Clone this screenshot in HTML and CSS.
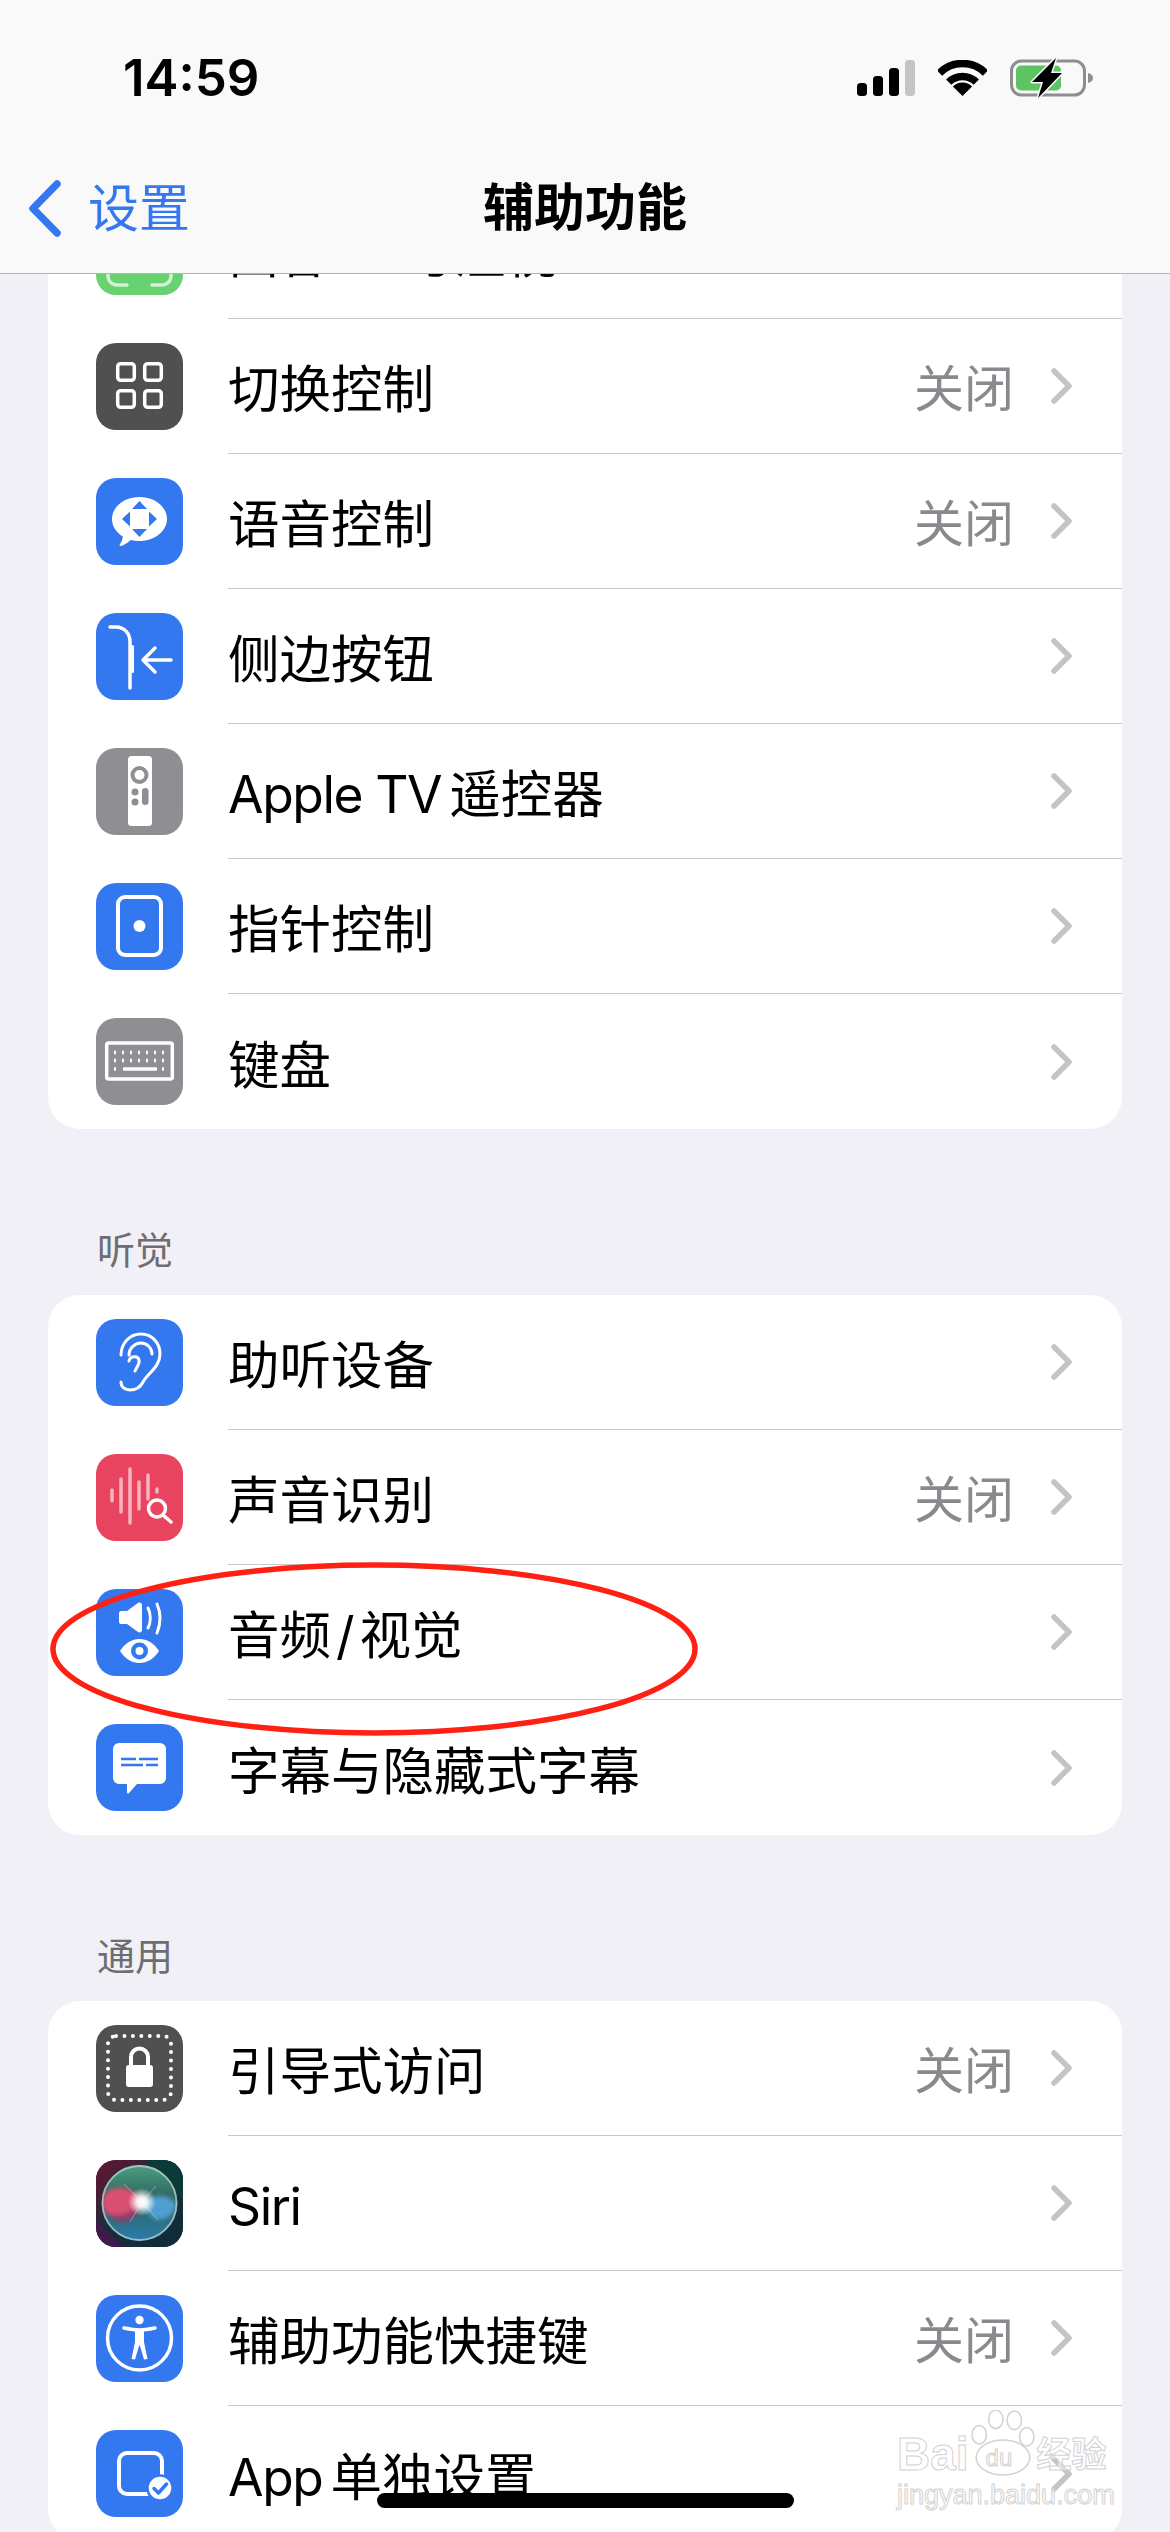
FILE: index.html
```html
<!DOCTYPE html>
<html lang="zh-CN">
<head>
    <meta charset="UTF-8">
    <title>辅助功能</title>
    <link rel="stylesheet" href="styles.css">
</head>
<body>
<div class="screen">

    <!-- scrolled list -->
    <div class="list">
        <div class="card card-top">
            <div class="row">
                <span class="icon icon-green">
                    <svg viewBox="0 0 87 87"><path class="line-soft" d="M12 58v10a9 9 0 0 0 9 9h10M75 58v10a9 9 0 0 1-9 9H56M12 29V19a9 9 0 0 1 9-9h10M75 29V19a9 9 0 0 0-9-9H56"/></svg>
                </span>
                <div class="row-main"><span class="label"><span class="latin">面容 ID </span>与注视</span><span class="chev"></span></div>
            </div>
            <div class="row">
                <span class="icon icon-dark">
                    <svg viewBox="0 0 87 87"><g class="line"><rect x="21.7" y="20.7" width="16.6" height="16.6" rx="3"/><rect x="48.7" y="20.7" width="16.6" height="16.6" rx="3"/><rect x="21.7" y="47.7" width="16.6" height="16.6" rx="3"/><rect x="48.7" y="47.7" width="16.6" height="16.6" rx="3"/></g></svg>
                </span>
                <div class="row-main"><span class="label">切换控制</span><span class="value">关闭</span><span class="chev"></span></div>
            </div>
            <div class="row">
                <span class="icon icon-blue">
                    <svg viewBox="0 0 87 87"><path class="solid" d="M43.5 19c15.2 0 27.5 9.8 27.5 22S58.700 63 43.500 63c-3 0-6-.4-8.700-1.100C31 65 27.500 67.500 25 68c-1.500 .2-1.800-1-1-2 1.500-2 2.500-4.500 2.800-7.500C20.300 54.500 16 48.200 16 41c0-12.200 12.300-22 27.500-22z"/><path class="cut" d="M43.500 23l7.500 8H36zM43.500 59L36 51h15zM26 41l8-7.500v15zM61 41l-8-7.500v15z"/></svg>
                </span>
                <div class="row-main"><span class="label">语音控制</span><span class="value">关闭</span><span class="chev"></span></div>
            </div>
            <div class="row">
                <span class="icon icon-blue">
                    <svg viewBox="0 0 87 87"><path class="line" d="M14 14h6c8 0 14 6 14 15v46"/><rect class="solid" x="33" y="32" width="5" height="28" rx="1.500"/><path class="line" d="M75 47H47M59 35L47 47l12 12"/></svg>
                </span>
                <div class="row-main"><span class="label">侧边按钮</span><span class="chev"></span></div>
            </div>
            <div class="row">
                <span class="icon icon-gray">
                    <svg viewBox="0 0 87 87"><rect class="solid" x="32" y="8" width="24" height="70" rx="3.500"/><circle class="ring-gray" cx="43.500" cy="27" r="7"/><circle class="fill-gray" cx="39" cy="44" r="3.500"/><circle class="fill-gray" cx="39" cy="54" r="3.500"/><rect class="fill-gray" x="46" y="40" width="6.500" height="17" rx="3.200"/></svg>
                </span>
                <div class="row-main"><span class="label"><span class="latin">Apple TV</span><span class="gap-s"></span>遥控器</span><span class="chev"></span></div>
            </div>
            <div class="row">
                <span class="icon icon-blue">
                    <svg viewBox="0 0 87 87"><rect class="line-wide" x="22" y="14" width="43" height="58" rx="7"/><circle class="solid" cx="43.500" cy="43" r="6"/></svg>
                </span>
                <div class="row-main"><span class="label">指针控制</span><span class="chev"></span></div>
            </div>
            <div class="row">
                <span class="icon icon-gray">
                    <svg viewBox="0 0 87 87">
                        <rect class="line" x="10.700" y="25" width="65.600" height="36" rx="2"/>
                        <path class="dots" d="M18 34.500h2M26 34.500h2M34 34.500h2M42 34.500h2M50 34.500h2M58 34.500h2M66 34.500h2M18 42.500h2M26 42.500h2M34 42.500h2M42 42.500h2M50 42.500h2M58 42.500h2M66 42.500h2M18 51h2M66 51h2"/>
                        <path class="dots" d="M27 51h34"/>
                    </svg>
                </span>
                <div class="row-main"><span class="label">键盘</span><span class="chev"></span></div>
            </div>
        </div>

        <div class="section-title">听觉</div>
        <div class="card">
            <div class="row">
                <span class="icon icon-blue">
                    <svg viewBox="0 0 87 87"><path class="line-thin" d="M25 36C25 24 34 15 45 15c11 0 19 9 19 20 0 13-12 19-17 28-3 6-7 8-13 8-5 0-9-3-9-8"/><path class="line-thin" d="M33 36c0-7 6-12 12-12s11 5 11 11"/><path class="line-thin" d="M33 42c1-5 9-6 10-1 1 4-2 6-4 11"/></svg>
                </span>
                <div class="row-main"><span class="label">助听设备</span><span class="chev"></span></div>
            </div>
            <div class="row">
                <span class="icon icon-red">
                    <svg viewBox="0 0 87 87"><path class="bars" d="M16 36v11M25 25v33M34 15v54M43 28v27M52 21v24M61 35v3"/><circle class="line" cx="61" cy="54.500" r="8.500"/><path class="line" d="M67 61l8 7"/></svg>
                </span>
                <div class="row-main"><span class="label">声音识别</span><span class="value">关闭</span><span class="chev"></span></div>
            </div>
            <div class="row">
                <span class="icon icon-blue">
                    <svg viewBox="0 0 87 87"><path class="solid" d="M23 24c0-1 1-2 2-2h6l11-8c2-1 4 0 4 2v25c0 2-2 3-4 2l-11-8h-6c-1 0-2-1-2-2z"/><path class="line-thin" d="M52 19c3 6 3 14 0 20M61 15c4 9 4 19 0 29"/><path class="solid" d="M24 62c5-8 12-12 19.500-12S58 54 63 62c-5 8-12 12-19.500 12S29 70 24 62z"/><circle class="cut" cx="43.500" cy="62" r="8.500"/><circle class="solid" cx="43.500" cy="62" r="4"/></svg>
                </span>
                <div class="row-main"><span class="label">音频<span class="slash">/</span>视觉</span><span class="chev"></span></div>
            </div>
            <div class="row">
                <span class="icon icon-blue">
                    <svg viewBox="0 0 87 87"><path class="solid" d="M23 19h41a6 6 0 0 1 6 6v29a6 6 0 0 1-6 6H41l-8 9c-1 1-2 .500-2-1v-8h-8a6 6 0 0 1-6-6V25a6 6 0 0 1 6-6z"/><path class="caption-lines" d="M25 35h15M43 35h19M25 41h22M50 41h12"/></svg>
                </span>
                <div class="row-main"><span class="label">字幕与隐藏式字幕</span><span class="chev"></span></div>
            </div>
        </div>

        <div class="section-title">通用</div>
        <div class="card">
            <div class="row">
                <span class="icon icon-dark">
                    <svg viewBox="0 0 87 87"><rect class="dotted" x="12" y="11" width="63" height="64" rx="8"/><rect class="solid" x="30" y="40" width="27" height="22" rx="3"/><path class="line-wide" d="M35 41v-9a8.500 8.500 0 0 1 17 0v9"/></svg>
                </span>
                <div class="row-main"><span class="label">引导式访问</span><span class="value">关闭</span><span class="chev"></span></div>
            </div>
            <div class="row">
                <span class="icon icon-siri">
                    <svg viewBox="0 0 87 87">
                        <defs>
                            <linearGradient id="siriBg" x1="0" y1="0" x2="1" y2="1">
                                <stop offset="0" stop-color="#6b1230"/>
                                <stop offset=".45" stop-color="#1c2c3c"/>
                                <stop offset="1" stop-color="#0e2c3a"/>
                            </linearGradient>
                            <linearGradient id="siriBody" x1="0" y1="0" x2="0" y2="1">
                                <stop offset="0" stop-color="#4a9f7f"/>
                                <stop offset=".45" stop-color="#2f6360"/>
                                <stop offset="1" stop-color="#2a7cab"/>
                            </linearGradient>
                            <radialGradient id="siriGlow">
                                <stop offset="0" stop-color="#fff"/>
                                <stop offset=".35" stop-color="#fff" stop-opacity=".9"/>
                                <stop offset="1" stop-color="#fff" stop-opacity="0"/>
                            </radialGradient>
                            <filter id="siriBlur"><feGaussianBlur stdDeviation="2"/></filter>
                            <clipPath id="siriBall"><circle cx="43.500" cy="43" r="38"/></clipPath>
                        </defs>
                        <rect width="87" height="87" fill="url(#siriBg)"/>
                        <path d="M87 0v40L60 12 50 0z" fill="#0c3a38"/>
                        <path d="M0 87V62l28 25z" fill="#4a1552" opacity=".8"/>
                        <circle cx="43.500" cy="43" r="38" fill="url(#siriBody)"/>
                        <g clip-path="url(#siriBall)" filter="url(#siriBlur)">
                            <path d="M48 43C40 26 14 22 7 37c-4 14 6 21 16 20 10-1 17-7 25-14z" fill="#d94f6f"/>
                            <path d="M46 43C56 34 74 33 80 44c-1 12-12 17-20 15-6-2-10-9-14-16z" fill="#4f9fd0"/>
                            <path d="M46 43C36 52 24 58 12 54c8 12 28 12 34-11z" fill="#8a3f6c"/>
                        </g>
                        <circle cx="43.500" cy="43" r="37" fill="none" stroke="#b9d6d0" stroke-width="1.800" opacity=".75"/>
                        <path d="M46 42L28 24M46 42L62 60M46 42L34 62M46 42L60 26" stroke="#fff" stroke-width="1" opacity=".35"/>
                        <circle cx="46" cy="42" r="14" fill="url(#siriGlow)"/>
                    </svg>
                </span>
                <div class="row-main"><span class="label"><span class="latin">Siri</span></span><span class="chev"></span></div>
            </div>
            <div class="row">
                <span class="icon icon-blue">
                    <svg viewBox="0 0 87 87"><circle class="line" cx="43.500" cy="43" r="32"/><circle class="solid" cx="43.500" cy="25" r="4.200"/><path class="line" d="M28 33c5 1 10 2 15.500 2S54 34 59 33"/><path class="solid" d="M39 34h9v13l3.500 17-3.500 .6-4.500-15-4.500 15-3.500-.6L39 47z"/></svg>
                </span>
                <div class="row-main"><span class="label">辅助功能快捷键</span><span class="value">关闭</span><span class="chev"></span></div>
            </div>
            <div class="row">
                <span class="icon icon-blue">
                    <svg viewBox="0 0 87 87"><rect class="line-wide" x="23" y="23" width="43" height="41" rx="8"/><circle class="badge" cx="64" cy="58" r="12.500"/><path class="check" d="M58 58.500l4.500 4.500 8-9"/></svg>
                </span>
                <div class="row-main"><span class="label"><span class="latin">App</span><span class="gap-s"></span>单独设置</span><span class="chev"></span></div>
            </div>
        </div>
    </div>

    <!-- nav bar sits over the list -->
    <div class="nav">
        <div class="status">
            <span class="time">14:59</span>
            <div class="status-icons">
                <svg class="signal" viewBox="0 0 58 36"><rect y="23" width="10" height="13" rx="3.500"/><rect x="16" y="16" width="10" height="20" rx="3.500"/><rect x="32" y="8" width="10" height="28" rx="3.500"/><rect class="signal-off" x="48" width="10" height="36" rx="3.500"/></svg>
                <svg class="wifi" viewBox="0 0 49 37"><path class="wifi-arc" d="M1.500 13A32.500 32.500 0 0 1 47.500 13M10.700 22.200A19.500 19.500 0 0 1 38.300 22.200"/><path d="M24.500 36L14.900 26.400A13.600 13.600 0 0 1 34.100 26.400Z"/></svg>
                <svg class="battery" viewBox="0 0 84 40">
                    <rect class="batt-body" x="1.500" y="3" width="73" height="34" rx="10"/>
                    <rect class="batt-fill" x="6" y="7.500" width="45" height="25" rx="5"/>
                    <path class="batt-nub" d="M78 15c3 .5 5 2.500 5 5s-2 4.500-5 5z"/>
                    <path class="batt-bolt" d="M46 0L22 24h11l-5 16 24-25H41z"/>
                </svg>
            </div>
        </div>
        <div class="titlebar">
            <div class="back">
                <svg class="back-chev" viewBox="0 0 33 57"><path d="M29 4L5 28.500 29 53"/></svg>
                <span>设置</span>
            </div>
            <div class="title">辅助功能</div>
        </div>
    </div>

    <!-- hand drawn mark round the row -->
    <svg class="circle-mark" viewBox="0 0 660 180"><ellipse cx="330" cy="90" rx="321" ry="84"/></svg>

    <div class="home-bar"></div>

    <!-- watermark -->
    <div class="watermark">
        <div class="wm-top">
            <span class="wm-word">Bai</span>
            <span class="wm-paw">
                <svg viewBox="0 0 64 64"><g><ellipse cx="32" cy="46" rx="26" ry="17"/><ellipse cx="25" cy="9" rx="7" ry="9"/><ellipse cx="43" cy="10" rx="7" ry="9"/><ellipse cx="9" cy="24" rx="7" ry="9"/><ellipse cx="55" cy="26" rx="7" ry="9"/></g></svg>
                <span class="wm-du">du</span>
            </span>
            <span class="wm-word wm-cn">经验</span>
        </div>
        <div class="wm-url">jingyan.baidu.com</div>
    </div>
</div>
</body>
</html>
```

FILE: styles.css
```css
* {
    box-sizing: border-box;
}
html, body {
    margin: 0;
    padding: 0;
}
body {
    font-family: Inter, "Noto Sans CJK SC", sans-serif;
    color: #000;
    background: #f0f0f6;
}
.screen {
    position: relative;
    width: 1170px;
    height: 2532px;
    overflow: hidden;
    background: #f0f0f6;
}

/* list */
.list {
    padding: 184px 48px 0;
}
.card {
    background: #fff;
    border-radius: 32px;
    overflow: hidden;
}
.card-top {
    border-radius: 0 0 32px 32px;
}
.section-title {
    height: 46px;
    margin: 98px 0 22px;
    padding-left: 49px;
    font-size: 38px;
    line-height: 46px;
    color: #6d6d72;
}
.row {
    display: flex;
    align-items: center;
    height: 135px;
    padding-left: 48px;
}
.row-main {
    flex: 1;
    display: flex;
    align-items: center;
    height: 135px;
    margin-left: 45px;
    padding-right: 50px;
    border-bottom: 1.5px solid #c8c8ca;
}
.row:last-child .row-main {
    border-bottom: none;
}
.label {
    flex: 1;
    padding-top: 6px;
    font-size: 51.5px;
    line-height: 60px;
    white-space: nowrap;
}
.latin {
    letter-spacing: -1.4px;
}
.gap-s {
    display: inline-block;
    width: 8px;
}
.slash {
    margin: 0 5px;
}
.value {
    margin-right: 37px;
    padding-top: 6px;
    font-size: 50px;
    line-height: 60px;
    color: #8a8a8e;
}
.chev {
    width: 21px;
    height: 36px;
    background: no-repeat center / 21px 36px url("data:image/svg+xml,%3Csvg xmlns='http://www.w3.org/2000/svg' viewBox='0 0 21 36'%3E%3Cpath d='M3 3l15 15L3 33' fill='none' stroke='%23c4c4c7' stroke-width='5.500' stroke-linecap='round' stroke-linejoin='round'/%3E%3C/svg%3E");
}

/* icons */
.icon {
    flex: none;
    width: 87px;
    height: 87px;
    border-radius: 20px;
    overflow: hidden;
}
.icon svg {
    display: block;
    width: 87px;
    height: 87px;
}
.icon-blue { background: #3478f0; }
.icon-dark { background: #505050; }
.icon-gray { background: #8e8e93; }
.icon-red { background: #e8435f; }
.icon-green { background: #67d26f; }
.icon-siri { background: #1c2c3c; }

.solid { fill: #fff; }
.cut { fill: #3478f0; }
.line, .line-wide, .line-thin, .line-soft {
    fill: none;
    stroke: #fff;
    stroke-linecap: round;
    stroke-linejoin: round;
}
.line { stroke-width: 3.5; }
.line-wide { stroke-width: 4; }
.line-thin { stroke-width: 3; }
.line-soft { stroke-width: 3.5; opacity: .7; }
.ring-gray { fill: none; stroke: #8e8e93; stroke-width: 4; }
.fill-gray { fill: #8e8e93; }
.dots {
    fill: none;
    stroke: #fff;
    stroke-width: 3.5;
}
.bars {
    fill: none;
    stroke: #f7b3c0;
    stroke-width: 3.5;
    stroke-linecap: round;
}
.caption-lines {
    fill: none;
    stroke: #3478f0;
    stroke-width: 2.5;
}
.dotted {
    fill: none;
    stroke: #fff;
    stroke-width: 4;
    stroke-linecap: round;
    stroke-dasharray: 0 8.45;
}
.badge {
    fill: #fff;
    stroke: #3478f0;
    stroke-width: 2.5;
}
.check {
    fill: none;
    stroke: #3478f0;
    stroke-width: 3.5;
    stroke-linecap: round;
    stroke-linejoin: round;
}

/* nav */
.nav {
    position: absolute;
    top: 0;
    left: 0;
    width: 1170px;
    height: 274px;
    background: #f9f9f9;
    border-bottom: 1.5px solid #b4b4b4;
}
.status {
    display: flex;
    justify-content: space-between;
    align-items: center;
    height: 78px;
    margin-top: 39px;
    padding: 0 76px 0 123px;
}
.time {
    font-size: 51px;
    font-weight: 600;
    line-height: 60px;
}
.status-icons {
    display: flex;
    align-items: center;
}
.signal {
    width: 58px;
    height: 36px;
    margin-right: 23px;
}
.signal-off { fill: #c4c4c4; }
.wifi {
    width: 49px;
    height: 37px;
    margin-right: 23px;
}
.wifi-arc {
    fill: none;
    stroke: #000;
    stroke-width: 7.5;
}
.battery {
    width: 84px;
    height: 40px;
}
.batt-body {
    fill: none;
    stroke: #8e8e8e;
    stroke-width: 3;
}
.batt-fill { fill: #5ec463; }
.batt-nub { fill: #8e8e8e; }
.batt-bolt {
    fill: #000;
    stroke: #f9f9f9;
    stroke-width: 3;
    paint-order: stroke;
    stroke-linejoin: round;
}
.titlebar {
    position: relative;
    display: flex;
    justify-content: center;
    align-items: center;
    height: 66px;
    margin-top: 58px;
}
.title {
    font-size: 51px;
    font-weight: 700;
    line-height: 66px;
}
.back {
    position: absolute;
    left: 28px;
    top: 5px;
    display: flex;
    align-items: center;
    color: #3478f0;
    font-size: 51px;
    line-height: 57px;
}
.back-chev {
    width: 33px;
    height: 57px;
    margin-right: 27px;
    fill: none;
    stroke: #3478f0;
    stroke-width: 7.5;
    stroke-linecap: round;
    stroke-linejoin: round;
}

/* overlays */
.circle-mark {
    position: absolute;
    left: 44px;
    top: 1559px;
    width: 660px;
    height: 180px;
}
.circle-mark ellipse {
    fill: none;
    stroke: #ff2014;
    stroke-width: 5.5;
}
.home-bar {
    position: absolute;
    left: 377px;
    top: 2493px;
    width: 417px;
    height: 15px;
    background: #000;
    border-radius: 8px;
}
.watermark {
    position: absolute;
    left: 897px;
    top: 2410px;
    width: 214px;
    display: flex;
    flex-direction: column;
}
.wm-top {
    display: flex;
    align-items: flex-end;
    height: 66px;
}
.wm-word, .wm-du, .wm-url {
    font-family: "Liberation Sans", "Noto Sans CJK SC", sans-serif;
    color: rgba(255, 255, 255, .55);
    -webkit-text-stroke: 1px #d2d2d2;
    white-space: nowrap;
}
.wm-word {
    font-size: 46px;
    font-weight: 700;
    line-height: 44px;
}
.wm-cn {
    font-size: 35px;
    line-height: 42px;
}
.wm-paw {
    position: relative;
    flex: none;
    width: 66px;
    height: 66px;
    margin: 0 1px;
}
.wm-paw svg {
    width: 66px;
    height: 66px;
    fill: rgba(255, 255, 255, .5);
    stroke: #d2d2d2;
    stroke-width: 1.5;
}
.wm-du {
    position: absolute;
    left: 16px;
    bottom: 5px;
    font-size: 24px;
    line-height: 26px;
}
.wm-url {
    margin-top: 4px;
    font-size: 27px;
    line-height: 30px;
}
```
